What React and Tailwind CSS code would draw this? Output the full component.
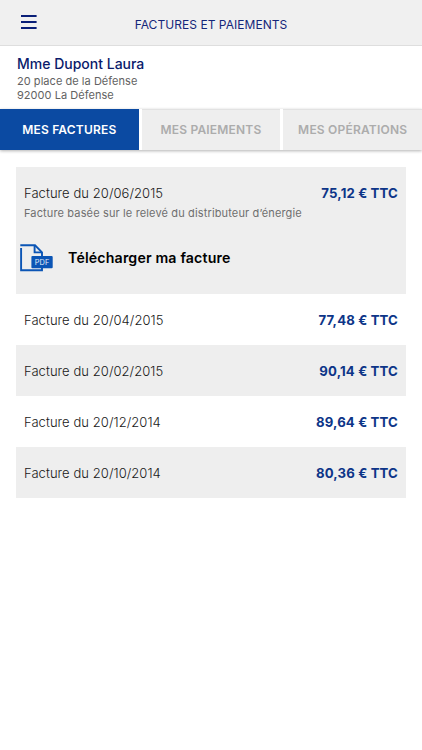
import React, { useState } from 'react';

const tabs = ['MES FACTURES', 'MES PAIEMENTS', 'MES OPÉRATIONS'];

const invoices = [
  { date: '20/06/2015', amount: '75,12 € TTC', note: 'Facture basée sur le relevé du distributeur d’énergie' },
  { date: '20/04/2015', amount: '77,48 € TTC' },
  { date: '20/02/2015', amount: '90,14 € TTC' },
  { date: '20/12/2014', amount: '89,64 € TTC' },
  { date: '20/10/2014', amount: '80,36 € TTC' },
];

const MenuIcon = () => (
  <svg width="16" height="14" viewBox="0 0 16 14" fill="#0a1f78">
    <rect y="0" width="15.6" height="2" />
    <rect y="6" width="15.6" height="2" />
    <rect y="12" width="15.6" height="2" />
  </svg>
);

const PdfIcon = () => (
  <svg width="34" height="28" viewBox="0 0 34 28" fill="none">
    <path d="M0.3 1.3H15L22 8.3V12M22 23V26.2H1.1V4" stroke="#0b55b5" strokeWidth="1.9" />
    <path d="M14.6 1.4V8.4H22" stroke="#0b55b5" strokeWidth="1.9" />
    <rect x="11.4" y="12" width="21.3" height="12.2" rx="1" fill="#0b55b5" />
    <text x="22.2" y="20.8" textAnchor="middle" fontFamily="Inter, sans-serif" fontSize="7.4" fontWeight="400" fill="#e4edf8">PDF</text>
  </svg>
);

const InvoiceRow = ({ invoice }) => (
  <li className="odd:bg-[#eeeeee]">
    <div className="h-[51px] pt-[2px] px-2 flex items-center justify-between">
      <span className="text-[13px] tracking-[0.06px] text-[#181818] font-light">Facture du {invoice.date}</span>
      <span className="text-[13.2px] tracking-[0.14px] text-[#0d3588] font-bold">{invoice.amount}</span>
    </div>
    {invoice.note && (
      <div className="h-[76px] flex flex-col items-start">
        <p className="-mt-[14px] px-2 text-[11px] leading-[18px] tracking-[0.14px] text-[#6e6e6e]">{invoice.note}</p>
        <button className="mt-[22px] ml-1 flex items-center gap-[14px] text-[14.2px] leading-7 tracking-[0.15px] font-semibold text-black">
          <PdfIcon />
          Télécharger ma facture
        </button>
      </div>
    )}
  </li>
);

const App = () => {
  const [active, setActive] = useState(0);

  return (
    <div className="min-h-screen bg-white font-['Inter','Liberation_Sans',sans-serif]">
      {/* Top bar */}
      <header className="h-[46px] bg-[#f0f0f0] border-b border-[#dedede] grid grid-cols-[60px_1fr_60px] items-center">
        <button aria-label="Menu" className="pl-[21px] pb-[2px]">
          <MenuIcon />
        </button>
        <h1 className="pt-1 text-center text-[12px] tracking-[0.05px] text-[#14267a]">FACTURES ET PAIEMENTS</h1>
      </header>

      {/* Customer */}
      <section className="h-[63px] pt-2 pl-[17px]">
        <h2 className="text-[14px] leading-5 font-medium text-[#0a1b6b]">Mme Dupont Laura</h2>
        <p className="text-[11px] leading-[14px] tracking-[0.04px] text-[#626262]">20 place de la Défense</p>
        <p className="text-[11px] leading-[14px] tracking-[0.04px] text-[#626262]">92000 La Défense</p>
      </section>

      {/* Tabs */}
      <nav className="h-[41px] grid grid-cols-3 gap-[3px] shadow-[0_1px_3px_rgba(0,0,0,0.3)]">
        {tabs.map((tab, i) => (
          <button
            key={tab}
            onClick={() => setActive(i)}
            className={`text-[12px] font-semibold tracking-[0.2px] whitespace-nowrap ${
              i === active ? 'bg-[#0b4aa2] text-white' : 'bg-[#eeeeee] text-[#acacac] border-t border-[#e2e2e2]'
            }`}
          >
            {tab}
          </button>
        ))}
      </nav>

      {/* Invoices */}
      <ul className="mt-[17px] mx-4">
        {invoices.map(invoice => (
          <InvoiceRow key={invoice.date} invoice={invoice} />
        ))}
      </ul>
    </div>
  );
};

export default App;
